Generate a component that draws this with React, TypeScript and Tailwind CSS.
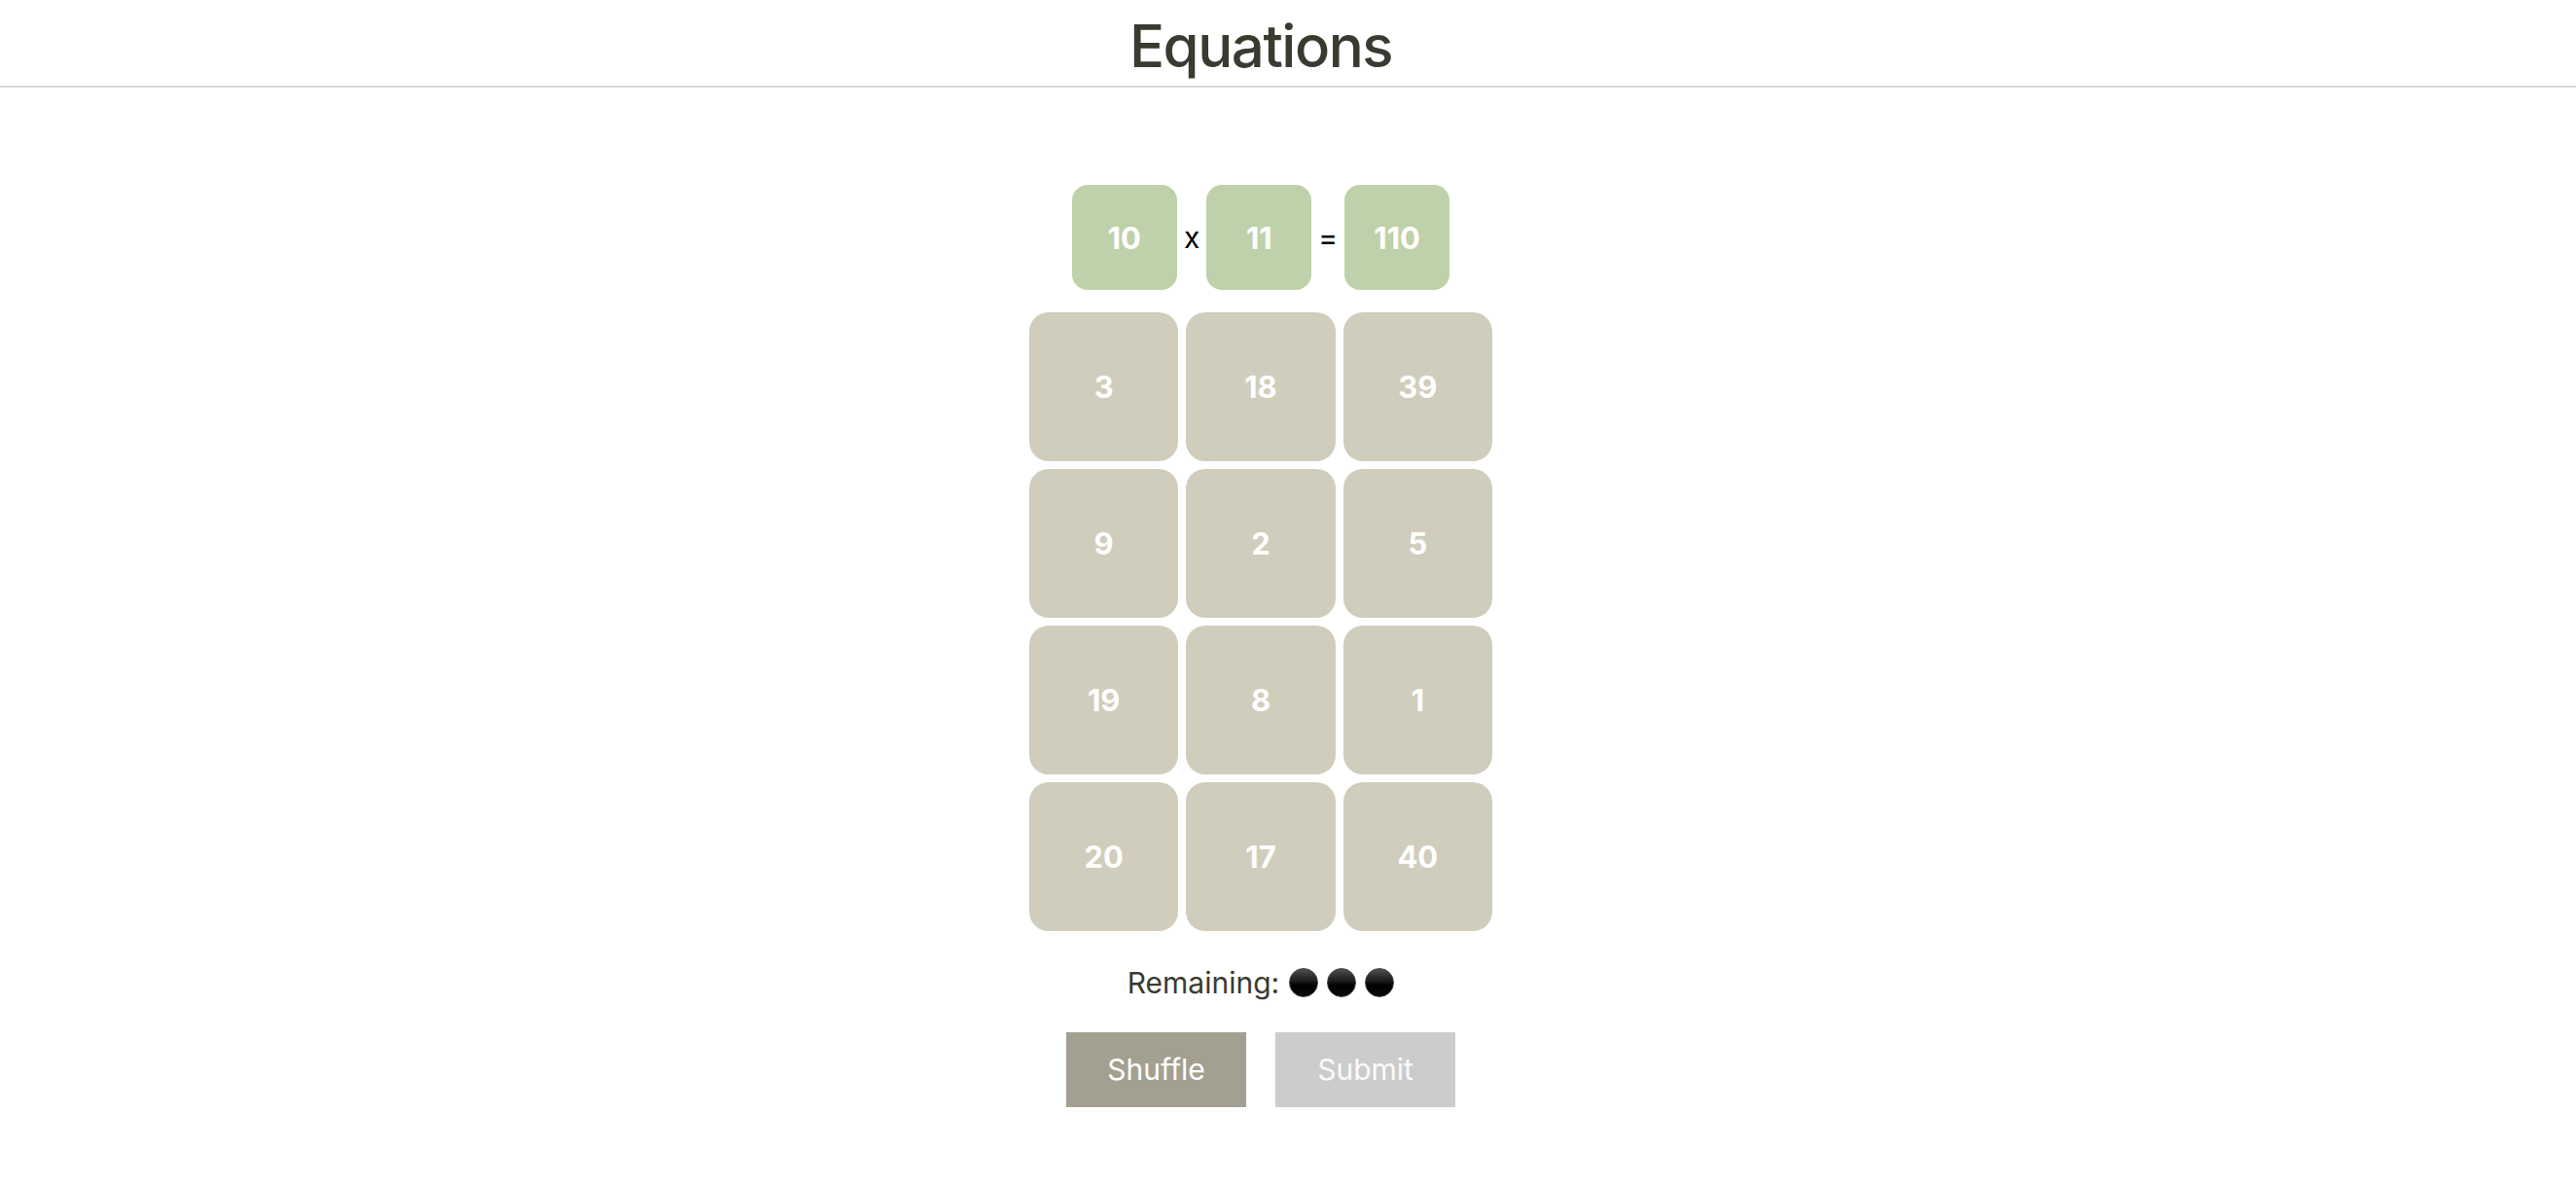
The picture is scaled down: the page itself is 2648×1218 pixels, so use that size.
import React from "react";

const grid = [3, 18, 39, 9, 2, 5, 19, 8, 1, 20, 17, 40];

function Dot() {
  return (
    <span className="inline-block w-[30px] h-[30px] rounded-full border border-[#3a3a3a] bg-[linear-gradient(to_bottom,#505050_0%,#1a1a1a_45%,#000000_60%,#0a0a0a_100%)]" />
  );
}

function EqTile({ v }: { v: string }) {
  return (
    <div className="w-[108px] h-[108px] rounded-[16px] bg-[#bfd1aa] text-white font-bold text-[31px] flex items-center justify-center pt-[2px]">
      {v}
    </div>
  );
}

export default function App() {
  return (
    <div className="min-h-screen bg-white font-['Inter','Noto_Sans',sans-serif]">
      <header className="h-[90px] border-b-2 border-[#d9d9d9] flex items-center justify-center pr-[56px] pt-[5px]">
        <h1 className="text-[60px] leading-none font-medium text-[#3b3a30] tracking-[-1.5px]">Equations</h1>
      </header>
      <main className="flex flex-col items-center pr-[56px] pt-[100px]">
        <div className="flex items-center">
          <EqTile v="10" />
          <span className="mx-[7px] text-[30px] text-black">x</span>
          <EqTile v="11" />
          <span className="mx-[7px] text-[30px] text-black">=</span>
          <EqTile v="110" />
        </div>
        <div className="mt-[23px] grid grid-cols-3 gap-[8px] w-[476px]">
          {grid.map((n) => (
            <div
              key={n}
              className="h-[153px] rounded-[20px] bg-[#d0cdbc] text-white font-bold text-[31px] flex items-center justify-center pt-[2px]"
            >
              {n}
            </div>
          ))}
        </div>
        <div className="mt-[35px] h-[36px] flex items-center text-[30px] text-[#3b3a30]">
          <span className="mr-[10px]">Remaining:</span>
          <div className="flex items-center gap-[9px]">
            <Dot />
            <Dot />
            <Dot />
          </div>
        </div>
        <div className="mt-[33px] flex gap-[30px]">
          <button className="w-[185px] h-[77px] bg-[#a3a092] text-white text-[30px]">Shuffle</button>
          <button className="w-[185px] h-[77px] bg-[#cccccc] text-[#fafafa] text-[30px]">Submit</button>
        </div>
      </main>
    </div>
  );
}
